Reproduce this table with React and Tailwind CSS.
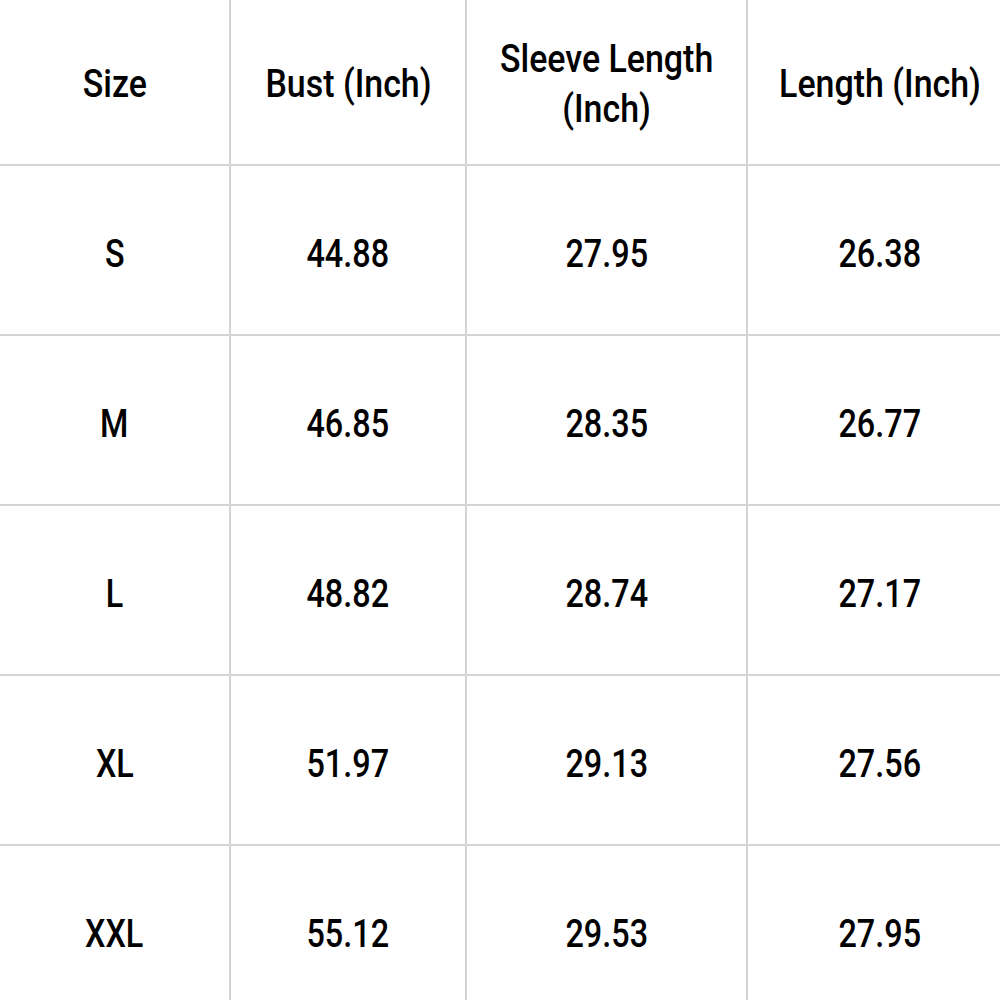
import React from "react";

const rows = [
  ["S", "44.88", "27.95", "26.38"],
  ["M", "46.85", "28.35", "26.77"],
  ["L", "48.82", "28.74", "27.17"],
  ["XL", "51.97", "29.13", "27.56"],
  ["XXL", "55.12", "29.53", "27.95"],
];

const widths = ["w-[231px]", "w-[236px]", "w-[281px]", "w-[264px]"];

function Cell({ i, head, children }) {
  return (
    <div
      className={`${widths[i]} shrink-0 flex items-center justify-center text-center ${
        head ? "pt-[4px]" : "pt-[8px]"
      } ${i < 3 ? "border-r-2 border-[#d4d4d4]" : ""}`}
    >
      <span
        className={`inline-block whitespace-nowrap leading-[50px] ${
          head ? "scale-x-[0.87]" : "scale-x-[0.83]"
        }`}
      >
        {children}
      </span>
    </div>
  );
}

export default function App() {
  return (
    <div
      className="w-[1000px] h-[1000px] overflow-hidden bg-white text-black text-[39px] font-medium"
      style={{ fontFamily: "Roboto, 'Liberation Sans', sans-serif" }}
    >
      <div className="w-[1012px]">
        <div className="flex h-[166px] border-b-2 border-[#d4d4d4]">
          <Cell i={0} head>Size</Cell>
          <Cell i={1} head>Bust (Inch)</Cell>
          <Cell i={2} head>
            Sleeve Length
            <br />
            (Inch)
          </Cell>
          <Cell i={3} head>Length (Inch)</Cell>
        </div>
        {rows.map((r) => (
          <div key={r[0]} className="flex h-[170px] border-b-2 border-[#d4d4d4]">
            {r.map((v, i) => (
              <Cell key={i} i={i}>
                {v}
              </Cell>
            ))}
          </div>
        ))}
      </div>
    </div>
  );
}
